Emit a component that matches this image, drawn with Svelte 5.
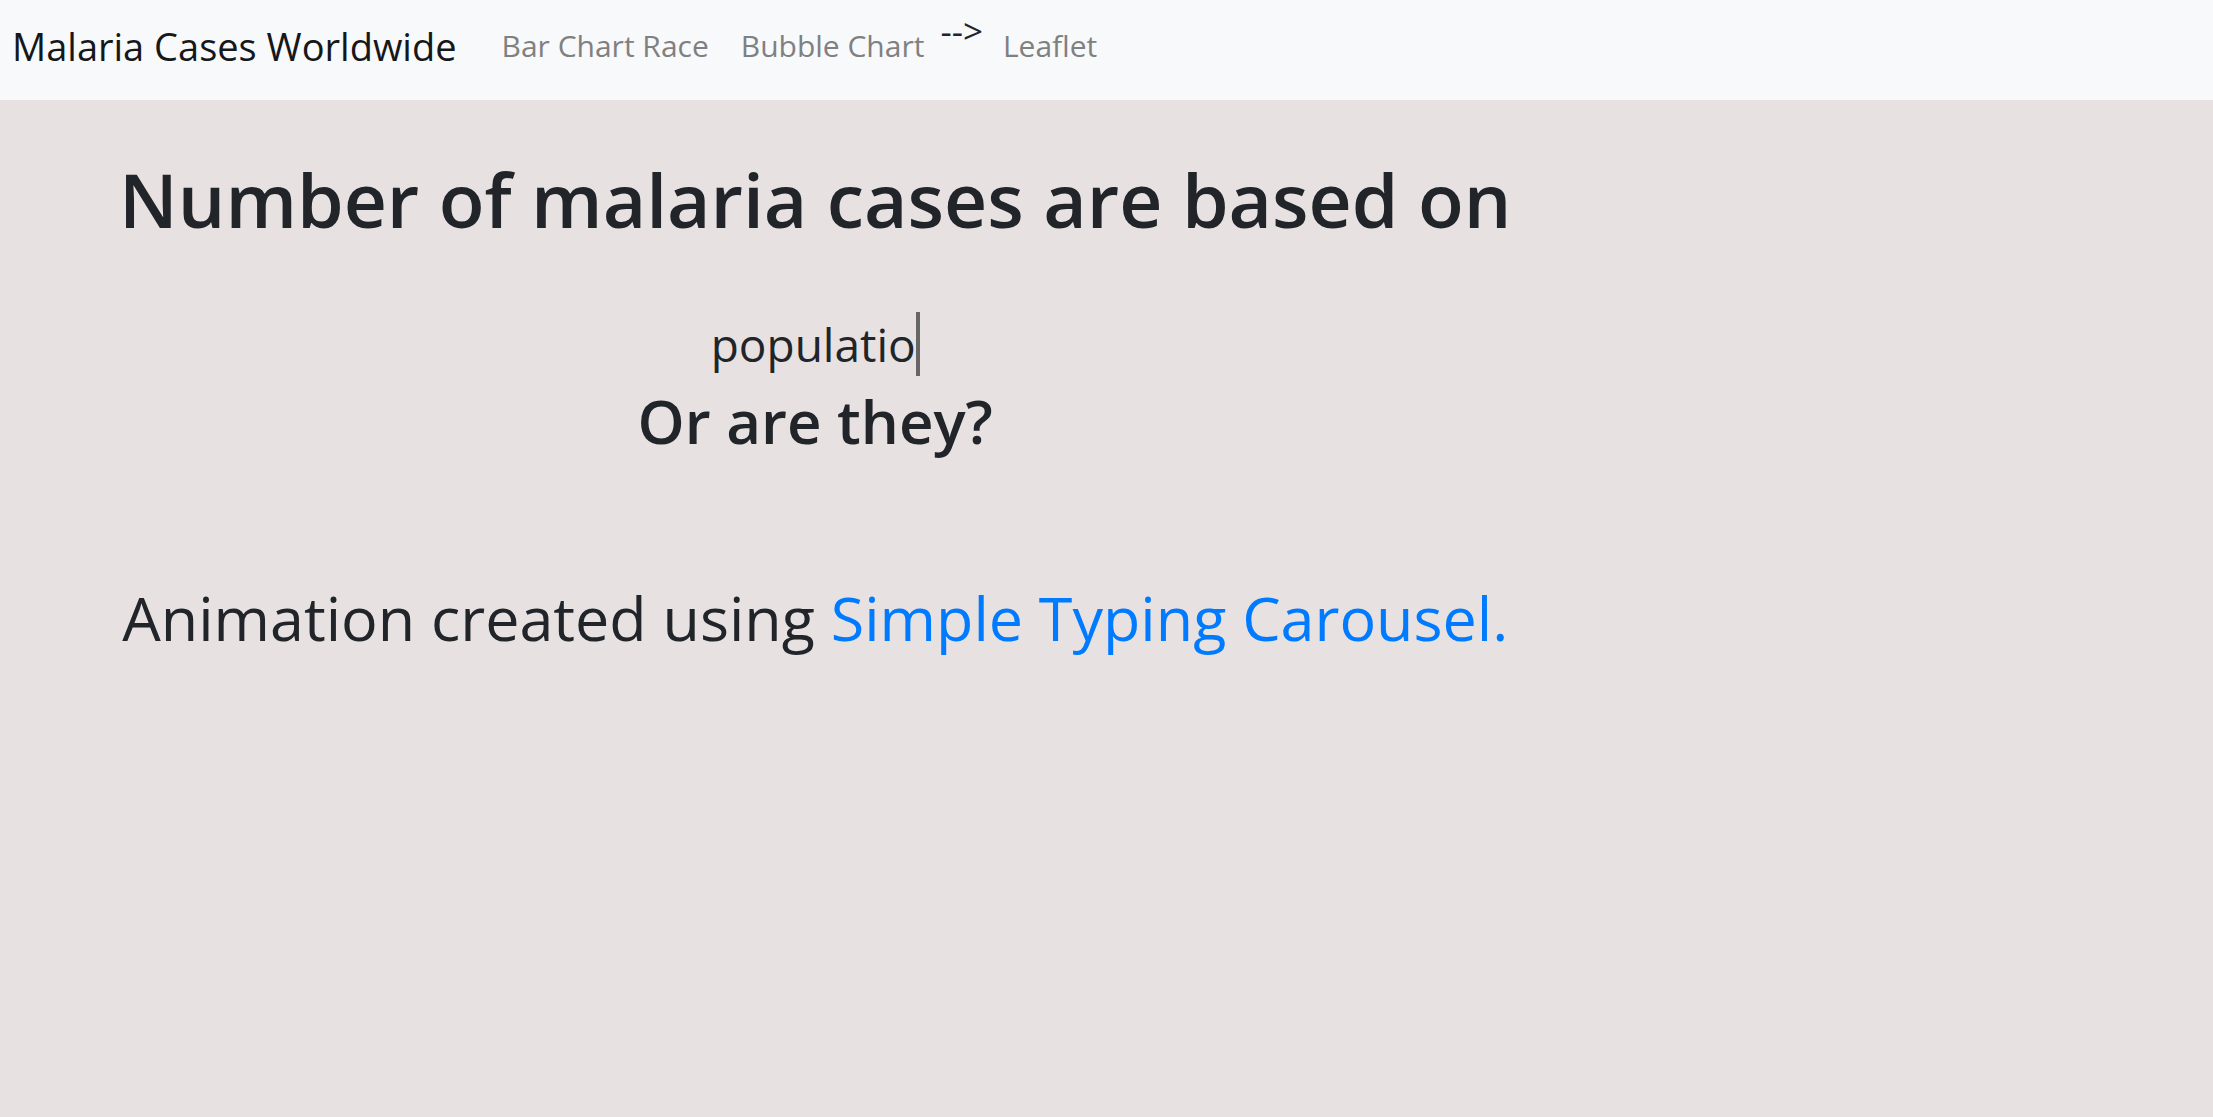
<script>
  const typed = 'populatio';
</script>

<header>
  <nav aria-label="Main">
    <a class="brand" href="#home">Malaria Cases Worldwide</a>
    <ul>
      <li><a href="#race">Bar Chart Race</a></li>
      <li><a href="#bubble">Bubble Chart</a></li>
      <li class="arrow">--&gt;</li>
      <li><a href="#leaflet">Leaflet</a></li>
    </ul>
  </nav>
</header>

<main>
  <section>
    <h1>Number of malaria cases are based on</h1>
    <p class="typing"><span>{typed}</span></p>
    <h2>Or are they?</h2>
    <p class="credit">Animation created using <a href="#carousel">Simple Typing Carousel.</a></p>
  </section>
</main>

<style>
  :global(body) {
    margin: 0;
    background: #e7e1e1;
    color: #212529;
    font-family: 'Segoe UI', 'Open Sans', 'Noto Sans', sans-serif;
  }

  a {
    text-decoration: none;
  }

  header {
    background: #f8f9fa;
  }

  nav {
    display: flex;
    align-items: center;
    padding: 16px 12px 24px;
  }

  .brand {
    margin-right: 29px;
    color: #151719;
    font-size: 38px;
    line-height: 60px;
    white-space: nowrap;
  }

  ul {
    display: flex;
    margin: 0;
    padding: 0;
    list-style: none;
    font-size: 30px;
    line-height: 60px;
    white-space: nowrap;
  }

  li a {
    display: block;
    padding: 0 16px;
    color: #7f8081;
  }

  .arrow {
    margin-right: 4px;
    font-size: 35px;
    line-height: 30px;
  }

  main {
    display: flex;
    padding: 48px 119px;
  }

  section {
    text-align: center;
  }

  h1,
  h2,
  p {
    margin: 0;
  }

  h1 {
    font-size: 75px;
    font-weight: 600;
    line-height: 102px;
  }

  .typing {
    margin-top: 62px;
    font-size: 46px;
    line-height: 64px;
  }

  .typing span {
    display: inline-block;
    border-right: 4px solid #666;
  }

  h2 {
    font-size: 60px;
    font-weight: 600;
    line-height: 90px;
  }

  .credit {
    margin-top: 106px;
    font-size: 61px;
    line-height: 92px;
  }

  .credit a {
    color: #007bff;
  }
</style>
